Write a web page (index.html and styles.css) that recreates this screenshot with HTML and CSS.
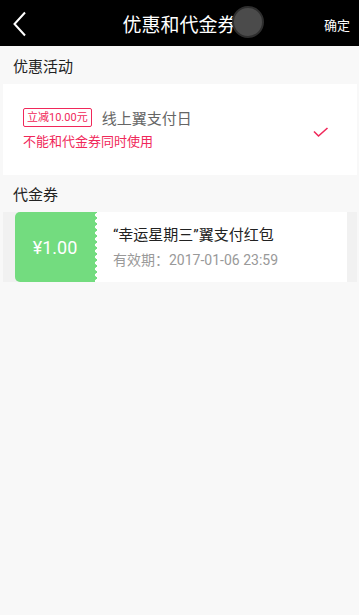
FILE: index.html
```html
<!DOCTYPE html>
<html lang="zh">
<head>
<meta charset="utf-8">
<link rel="stylesheet" href="styles.css">
</head>
<body>
<header class="topbar">
  <svg class="back" width="16" height="26" viewBox="0 0 16 26"><path d="M13 1.5 L2.5 13 L13 24.5" fill="none" stroke="#fff" stroke-width="2"/></svg>
  <div class="title">优惠和代金券</div>
  <div class="confirm">确定</div>
  <div class="dot"></div>
</header>
<div class="section-title">优惠活动</div>
<div class="promo">
  <div class="promo-info">
    <div class="promo-line">
      <span class="tag">立减10.00元</span>
      <span class="promo-name">线上翼支付日</span>
    </div>
    <div class="warn">不能和代金券同时使用</div>
  </div>
  <svg class="check" width="16" height="11" viewBox="0 0 16 11"><path d="M1 4.5 L5.5 9 L14.5 1" fill="none" stroke="#f0285a" stroke-width="1.6"/></svg>
</div>
<div class="section-title second">代金券</div>
<div class="coupon-row">
  <div class="coupon">
    <div class="amount">¥1.00</div>
    <div class="coupon-info">
      <div class="coupon-name">“幸运星期三”翼支付红包</div>
      <div class="coupon-date">有效期：2017-01-06 23:59</div>
    </div>
  </div>
</div>
</body>
</html>
```
FILE: styles.css
```css
* { box-sizing: border-box; }
html, body { margin: 0; padding: 0; }
body {
  width: 359px;
  height: 615px;
  background: #f8f8f8;
  font-family: "Roboto", "Noto Sans CJK SC", sans-serif;
  overflow: hidden;
}
.topbar {
  position: relative;
  height: 46px;
  background: #000;
  display: flex;
  align-items: center;
  justify-content: center;
}
.back { position: absolute; left: 12px; top: 11px; }
.title { color: #fff; font-size: 19px; }
.confirm { position: absolute; right: 9px; top: 15px; color: #fff; font-size: 13px; }
.dot {
  position: absolute;
  left: 232px;
  top: 6px;
  width: 32px;
  height: 32px;
  border-radius: 50%;
  background: #4b4b4b;
  border: 2px solid #2e2e2e;
}
.section-title {
  height: 38px;
  padding-left: 13px;
  display: flex;
  align-items: center;
  font-size: 15px;
  color: #222;
}
.section-title.second { height: 37px; margin-top: 0; }
.promo {
  margin: 0 2px 0 3px;
  height: 91px;
  background: #fff;
  display: flex;
  align-items: center;
  padding: 0 28px 0 20px;
  justify-content: space-between;
}
.promo-info { display: flex; flex-direction: column; gap: 5px; margin-top: -2px; }
.promo-line { display: flex; align-items: center; gap: 10px; }
.tag {
  border: 1px solid #f0285a;
  border-radius: 2px;
  color: #f0285a;
  font-size: 11px;
  padding: 2px 3px;
  line-height: 13px;
}
.promo-name { color: #666; font-size: 15px; }
.warn { color: #f0285a; font-size: 13px; line-height: 18px; }
.check { margin-top: 6px; }
.coupon-row {
  margin: 0 2px 0 3px;
  height: 70px;
  background: #f1f1f1;
  padding: 0 10px 0 12px;
}
.coupon { display: flex; height: 100%; }
.amount {
  position: relative;
  width: 82px;
  background: #73dc7f;
  border-radius: 5px 0 0 5px;
  color: #fff;
  font-size: 18px;
  display: flex;
  align-items: center;
  justify-content: center;
  padding-right: 2px;
}
.amount::after {
  content: "";
  position: absolute;
  right: -2px;
  top: 0;
  width: 4px;
  height: 100%;
  background: radial-gradient(circle at 2px 3px, #fff 1.8px, transparent 2.2px) 0 0 / 4px 6px repeat-y;
}
.coupon-info {
  flex: 1;
  background: #fff;
  padding: 13px 0 0 16px;
}
.coupon-name { font-size: 15px; color: #222; line-height: 20px; }
.coupon-date { font-size: 14px; color: #999; margin-top: 6px; line-height: 18px; }
```
